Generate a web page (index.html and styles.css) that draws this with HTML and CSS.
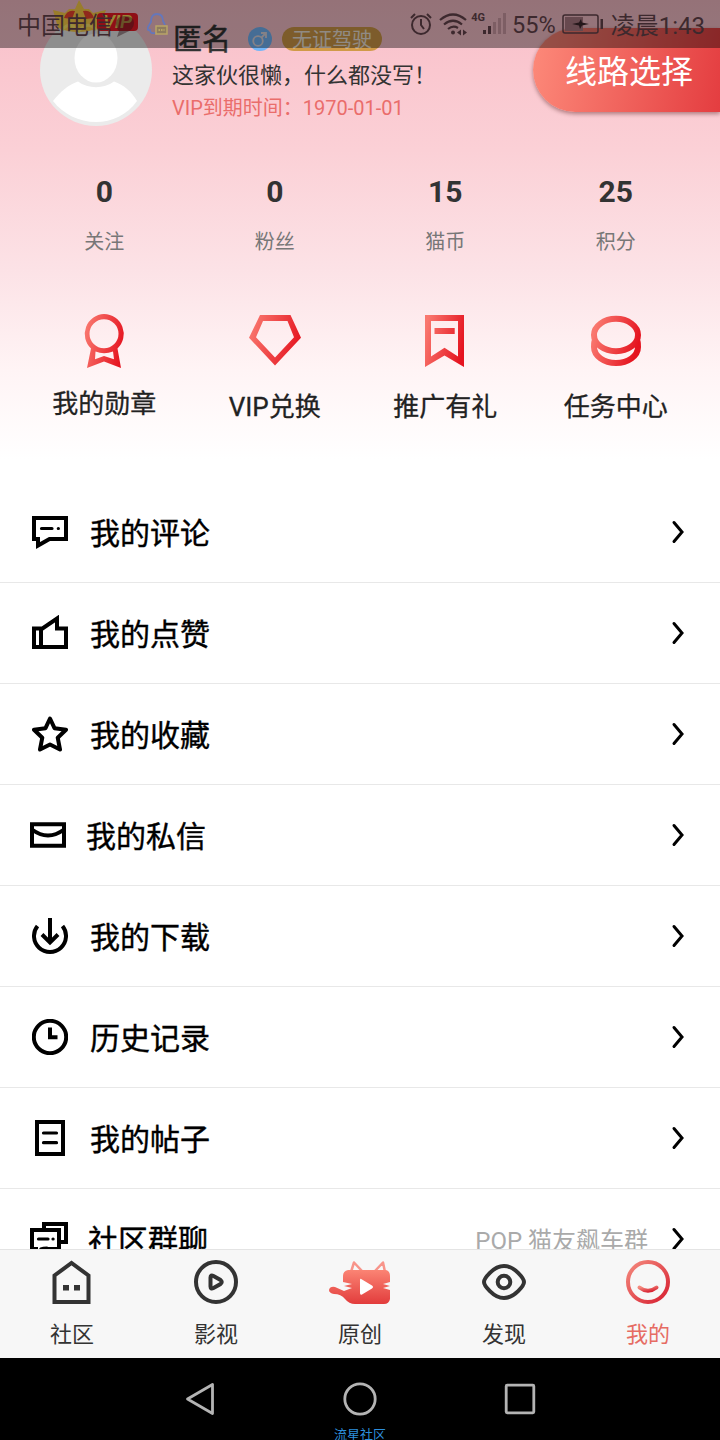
FILE: index.html
```
<!DOCTYPE html>
<html lang="zh-CN">
<head>
    <meta charset="UTF-8">
    <meta name="viewport" content="width=device-width, initial-scale=1.0">
    <title>我的</title>
    <link rel="stylesheet" href="styles.css">
</head>
<body>
    <!-- shared gradient for the red icons -->
    <svg class="defs" width="0" height="0">
        <defs>
            <linearGradient id="red" x1="0" y1="0.3" x2="1" y2="0.6">
                <stop offset="0" stop-color="#f9776e"/>
                <stop offset="1" stop-color="#e5131f"/>
            </linearGradient>
            <linearGradient id="cat" x1="0" y1="0" x2="0" y2="1">
                <stop offset="0" stop-color="#fb8474"/>
                <stop offset="1" stop-color="#e23c3c"/>
            </linearGradient>
            <linearGradient id="smile" x1="0" y1="0" x2="1" y2="1">
                <stop offset="0" stop-color="#f48a7e"/>
                <stop offset="1" stop-color="#d71f30"/>
            </linearGradient>
        </defs>
    </svg>

    <div class="app">
        <main class="content">
            <header class="profile">
                <div class="avatar">
                    <svg width="112" height="112" viewBox="0 0 112 112">
                        <circle cx="56" cy="56" r="56" fill="#ebebeb"/>
                        <ellipse cx="56" cy="44" rx="21.5" ry="24.5" fill="#fff"/>
                        <path d="M13 87C20 78 28 71 38 67.500C48 75 64 75 74 67.500C84 71 92 78 97 87C87 101 72 108 56 108C39 108 23 100 13 87Z" fill="#fff"/>
                    </svg>
                    <svg class="crown" width="58" height="34" viewBox="0 0 58 34">
                        <path d="M8 28L3 10L15 13L19 9L25 9L29 0L34 9L39 9L43 13L56 10L49 28Q28 36 8 28Z" fill="#ffd048"/>
                        <path d="M14 18Q17 9 25 11L22 19ZM33 11Q41 9 44 18L36 19Z" fill="#f0452f"/>
                        <path d="M12 30Q20 20 29 31Q38 20 46 30" fill="none" stroke="#ffe86a" stroke-width="3"/>
                    </svg>
                    <span class="vip-badge">VIP</span>
                </div>
                <div class="who">
                    <div class="name-line">
                        <span class="name">匿名</span>
                        <svg class="gender" width="24" height="24" viewBox="0 0 24 24">
                            <circle cx="12" cy="12" r="12" fill="#74b6f8"/>
                            <g fill="none" stroke="#dcd7e0" stroke-width="1.800">
                                <circle cx="10" cy="14" r="4.800"/>
                                <path d="M13.500 10.500L18 6M13 6H18V11"/>
                            </g>
                        </svg>
                        <span class="level">无证驾驶</span>
                    </div>
                    <div class="sign">这家伙很懒，什么都没写！</div>
                    <div class="expire">VIP到期时间：1970-01-01</div>
                </div>
                <div class="route">线路选择</div>
            </header>

            <section class="stats">
                <div class="stat"><b>0</b><span>关注</span></div>
                <div class="stat"><b>0</b><span>粉丝</span></div>
                <div class="stat"><b>15</b><span>猫币</span></div>
                <div class="stat"><b>25</b><span>积分</span></div>
            </section>

            <section class="shortcuts">
                <div class="shortcut medal">
                    <svg width="60" height="60" viewBox="0 0 60 60">
                        <path fill="url(#red)" fill-rule="evenodd" d="M30 3A20 20 0 0 1 43.500 37.500L47 57L30 50.500L13 57L17 37.500A20 20 0 0 1 30 3ZM30 8.300A14.500 14.500 0 1 0 30 37.300A14.500 14.500 0 1 0 30 8.300ZM21.500 40.500L21 48.300L30 45L40 48.300L39 40.500Q30 44 21.500 40.500Z"/>
                    </svg>
                    <span>我的勋章</span>
                </div>
                <div class="shortcut">
                    <svg width="60" height="60" viewBox="0 0 60 60">
                        <path fill="url(#red)" fill-rule="evenodd" d="M15 4H45.500L56 26.700L30 54.500L4 26.700ZM18 10L11 26.300L30 46.500L49 26.300L42.500 10Z"/>
                    </svg>
                    <span>VIP兑换</span>
                </div>
                <div class="shortcut">
                    <svg width="60" height="60" viewBox="0 0 60 60">
                        <path fill="url(#red)" fill-rule="evenodd" d="M10 4H49V56L29.500 44.500L10 56ZM16 10V45.500L29.500 36.700L43 45.500V10ZM19.500 17H39.700V23H19.500Z"/>
                    </svg>
                    <span>推广有礼</span>
                </div>
                <div class="shortcut">
                    <svg width="60" height="60" viewBox="0 0 60 60" fill="none" stroke="url(#red)" stroke-width="6">
                        <path d="M52 24A22 16.200 0 1 1 8 24A22 16.200 0 1 1 52 24ZM8.500 30Q8 32 8 36A22 16 0 0 0 52 36Q52 32 51.500 30"/>
                    </svg>
                    <span>任务中心</span>
                </div>
            </section>

            <section class="menu">
                <div class="row">
                    <svg class="icon" width="36" height="36" viewBox="0 0 36 36">
                        <path d="M2 4H34V25H17.500L6 31.500V25H2Z"/>
                        <path class="thin" d="M9.500 14.500H20M26.300 14.500H26.400"/>
                    </svg>
                    <span class="label">我的评论</span>
                    <svg class="arrow" width="14" height="24" viewBox="0 0 14 24"><path d="M3 2.500L11 12L3 21.500"/></svg>
                </div>
                <div class="row">
                    <svg class="icon" width="36" height="36" viewBox="0 0 36 36">
                        <path d="M2 13.500H10.500L25 3.500V13.500H34V32H2ZM9 13.500V32"/>
                    </svg>
                    <span class="label">我的点赞</span>
                    <svg class="arrow" width="14" height="24" viewBox="0 0 14 24"><path d="M3 2.500L11 12L3 21.500"/></svg>
                </div>
                <div class="row">
                    <svg class="icon round" width="36" height="36" viewBox="0 0 36 36">
                        <path d="M18 2.500L22.500 12.200L34 13.700L25.700 21.700L28 33.500L18 28.500L8 33.500L10.300 21.700L2 13.700L13.500 12.200Z"/>
                    </svg>
                    <span class="label">我的收藏</span>
                    <svg class="arrow" width="14" height="24" viewBox="0 0 14 24"><path d="M3 2.500L11 12L3 21.500"/></svg>
                </div>
                <div class="row mail">
                    <svg class="icon" width="36" height="36" viewBox="0 0 36 36">
                        <path d="M2 7.300H34V28.700H2ZM2 12.500Q18 24.500 34 12.500"/>
                    </svg>
                    <span class="label">我的私信</span>
                    <svg class="arrow" width="14" height="24" viewBox="0 0 14 24"><path d="M3 2.500L11 12L3 21.500"/></svg>
                </div>
                <div class="row">
                    <svg class="icon" width="36" height="36" viewBox="0 0 36 36">
                        <path d="M5.500 8A16 16 0 1 0 30.500 8M18 0V24M10 16.500L18 24.500L26 16.500"/>
                    </svg>
                    <span class="label">我的下载</span>
                    <svg class="arrow" width="14" height="24" viewBox="0 0 14 24"><path d="M3 2.500L11 12L3 21.500"/></svg>
                </div>
                <div class="row">
                    <svg class="icon" width="36" height="36" viewBox="0 0 36 36">
                        <circle cx="18" cy="18" r="16.200"/>
                        <path d="M18 8.500V18.300H25.500"/>
                    </svg>
                    <span class="label">历史记录</span>
                    <svg class="arrow" width="14" height="24" viewBox="0 0 14 24"><path d="M3 2.500L11 12L3 21.500"/></svg>
                </div>
                <div class="row">
                    <svg class="icon" width="36" height="36" viewBox="0 0 36 36">
                        <path d="M5 2H31V34H5Z"/>
                        <path class="thin" d="M11.500 13H24.500M11.500 22.700H24.500"/>
                    </svg>
                    <span class="label">我的帖子</span>
                    <svg class="arrow" width="14" height="24" viewBox="0 0 14 24"><path d="M3 2.500L11 12L3 21.500"/></svg>
                </div>
                <div class="row group">
                    <svg class="icon" width="38" height="36" viewBox="0 0 38 36">
                        <path d="M14 8V3H36V21H31M2 9H29V28H16L6 34V28H2Z"/>
                        <path class="thin" d="M8.500 18H18M23 18H23.100"/>
                        <path class="thin" d="M11 28Q13 27 17 27"/>
                    </svg>
                    <span class="label">社区群聊</span>
                    <span class="note">POP 猫友飙车群</span>
                    <svg class="arrow" width="14" height="24" viewBox="0 0 14 24"><path d="M3 2.500L11 12L3 21.500"/></svg>
                </div>
            </section>
        </main>

        <nav class="tabbar">
            <div class="tab">
                <svg width="44" height="44" viewBox="0 0 44 44">
                    <path d="M4.500 42V15.500L21.500 3L38.500 15.500V42Z" fill="none" stroke="#333" stroke-width="4"/>
                    <path d="M13 25H19V30.500H13ZM24 25H30V30.500H24Z" fill="#333"/>
                </svg>
                <span>社区</span>
            </div>
            <div class="tab">
                <svg width="44" height="44" viewBox="0 0 44 44" fill="none" stroke="#333" stroke-width="4">
                    <circle cx="22" cy="22" r="20"/>
                    <path d="M16.500 17.500Q16.500 14.500 19.500 16L26.500 20Q29 22 26.500 24L19.500 28Q16.500 29.500 16.500 26.500Z"/>
                </svg>
                <span>影视</span>
            </div>
            <div class="tab">
                <svg width="62" height="44" viewBox="0 0 62 44">
                    <path d="M22 12L25 2.500L33 11M46 11L54 2.500L56 12" fill="none" stroke="#f8948a" stroke-width="2.500" stroke-linejoin="round"/>
                    <path fill="url(#cat)" d="M19 10H57Q61 11 61 16V22L54 24L61 26L54 28L61 30V39Q60 44 55 44H26Q20 44 16 39Q12 34 5 34Q0 33 0 30Q1 26 6 27L15 31L23 28L15 26L23 24L14 22V16Q14 11 19 10Z"/>
                    <path d="M31 20Q31 18 33 19.500L43 25.500Q45 27 43 28.500L33 34.500Q31 35.500 31 33Z" fill="#fff"/>
                </svg>
                <span>原创</span>
            </div>
            <div class="tab">
                <svg width="44" height="44" viewBox="0 0 44 44" fill="none" stroke="#333" stroke-width="4">
                    <path d="M2 22C2 19 11 6 22 6C33 6 42 19 42 22C42 25 33 38 22 38C11 38 2 25 2 22Z"/>
                    <circle cx="22" cy="22" r="6.300"/>
                </svg>
                <span>发现</span>
            </div>
            <div class="tab active">
                <svg width="44" height="44" viewBox="0 0 44 44" fill="none" stroke="url(#smile)" stroke-width="4">
                    <circle cx="22" cy="22" r="20"/>
                    <path d="M13.500 27.500Q22 34 30.500 27.500" stroke-linecap="round"/>
                </svg>
                <span>我的</span>
            </div>
        </nav>

        <footer class="navbar">
            <svg width="34" height="36" viewBox="0 0 34 36"><path d="M29.500 3.500V32.500L4.500 18Z"/></svg>
            <svg width="34" height="36" viewBox="0 0 34 36"><circle cx="17" cy="18" r="15.200"/></svg>
            <svg width="34" height="36" viewBox="0 0 34 36"><rect x="3.200" y="4.200" width="27.600" height="27.600" rx="1"/></svg>
            <span class="mark">流星社区</span>
        </footer>

        <!-- translucent system bar over the page -->
        <div class="status">
            <span class="carrier">中国电信</span>
            <svg class="bubble" width="20" height="24" viewBox="0 0 20 24">
                <path d="M10 2Q19 2 19 9Q19 16 10 19L2 23L4 17Q1 14 1 9Q2 2 10 2Z" fill="#2d1519" opacity=".45"/>
            </svg>
            <svg class="qq" width="22" height="26" viewBox="0 0 22 26">
                <path d="M8 21Q3 22 3 18Q0 19 1 15L4 10Q4 2 10 2Q16 2 16 9L18 13" fill="none" stroke="#6577bb" stroke-width="1.800"/>
                <rect x="9" y="14" width="11" height="8" fill="#8e7c5f" stroke="#b8a467" stroke-width="1.500"/>
                <path d="M11.500 18H17.500" stroke="#c5b36b" stroke-width="1.500" stroke-dasharray="1.500 1"/>
            </svg>
            <svg class="alarm" width="24" height="24" viewBox="0 0 24 24" fill="none" stroke="#3d292e" stroke-width="2">
                <circle cx="12" cy="13" r="9"/>
                <path d="M12 7V13L15 17M2 6L6 2M18 2L22 6"/>
            </svg>
            <svg class="wifi" width="28" height="24" viewBox="0 0 28 24" fill="none" stroke="#3d292e" stroke-width="2.200">
                <path d="M1 8Q14 -3 27 8M5 12.500Q14 5 23 12.500M9 17Q14 13 19 16"/>
                <circle cx="14" cy="20.500" r="2" fill="#3d292e" stroke="none"/>
                <path d="M22 17.500V23.500L18 20.500ZM24 17.500V23.500L28 20.500Z" fill="#3d292e" stroke="none"/>
            </svg>
            <span class="net">4G</span>
            <svg class="signal" width="23" height="22" viewBox="0 0 23 22">
                <path d="M0 17H3V21H0ZM5 13H8V21H5Z" fill="#3d292e"/>
                <path d="M10 9H13V21H10ZM15 5H18V21H15ZM20 0H23V21H20Z" fill="#7d5e64"/>
            </svg>
            <span class="percent">55%</span>
            <svg class="battery" width="42" height="20" viewBox="0 0 42 20">
                <rect x="1" y="1" width="35" height="18" rx="2" fill="none" stroke="#3d292e" stroke-width="1.500"/>
                <rect x="3" y="3" width="18" height="14" fill="#67494f"/>
                <path d="M10 10L17 8.500L19 5L20 8.500L27 10L20 11.500L18 15L17 11.500Z" fill="#24171a"/>
                <path d="M38.500 5H41V15H38.500Z" fill="#3d292e"/>
            </svg>
            <span class="clock">凌晨1:43</span>
        </div>
    </div>
</body>
</html>
```
FILE: styles.css
```
* {
    box-sizing: border-box;
}
body {
    margin: 0;
    background: #fff;
    font-family: Roboto, "Noto Sans CJK SC", sans-serif;
    color: #333;
}
svg {
    display: block;
    flex: none;
}
.defs {
    position: absolute;
}
.app {
    position: relative;
    display: flex;
    flex-direction: column;
    width: 720px;
    height: 1440px;
    overflow: hidden;
}
.content {
    height: 1249px;
    overflow: hidden;
    background: linear-gradient(#f9bfc9 0, #fbd0d6 150px, #fce2e6 270px, #fff4f5 370px, #fff 460px);
}

/* profile */
.profile {
    display: flex;
    height: 134px;
    padding: 14px 0 0 40px;
}
.avatar {
    position: relative;
    width: 112px;
    height: 112px;
}
.crown {
    position: absolute;
    left: 10px;
    top: -14px;
}
.vip-badge {
    position: absolute;
    left: 57px;
    top: -1px;
    width: 41px;
    height: 18px;
    border-radius: 4px;
    background: #ee1a26;
    color: #ffe05a;
    font: italic bold 18px/18px "Liberation Sans", sans-serif;
    text-align: center;
}
.who {
    flex: 1;
    padding: 8px 0 0 20px;
    white-space: nowrap;
}
.name-line {
    display: flex;
    align-items: center;
    height: 34px;
}
.name {
    width: 76px;
    padding: 2px 0 0 1px;
    font-size: 29px;
    line-height: 34px;
    -webkit-text-stroke: 0.5px;
}
.level {
    width: 100px;
    height: 24px;
    margin-left: 10px;
    border-radius: 12px;
    background: #d09a48;
    color: #f0e6dc;
    font-size: 20px;
    line-height: 26px;
    text-align: center;
}
.sign {
    height: 36px;
    font-size: 22px;
    line-height: 40px;
}
.expire {
    font-size: 20px;
    line-height: 32px;
    color: #ea6d6b;
}
.route {
    width: 187px;
    height: 84px;
    margin-top: 14px;
    padding-left: 32px;
    border-radius: 42px 0 0 42px;
    background: linear-gradient(100deg, #fd8a7a, #e43d40);
    box-shadow: 0 2px 4px rgba(60, 0, 0, 0.4);
    color: #fff;
    font-size: 32px;
    line-height: 88px;
    white-space: nowrap;
}

/* counters */
.stats,
.shortcuts {
    display: grid;
    grid-template-columns: repeat(4, 1fr);
    padding: 0 19px;
    text-align: center;
}
.stats {
    height: 177px;
    padding-top: 38px;
}
.stat b {
    display: block;
    font-size: 30px;
    line-height: 40px;
}
.stat span {
    display: block;
    margin-top: 15px;
    font-size: 20px;
    line-height: 30px;
    color: #777;
}
.shortcuts {
    height: 171px;
    font-size: 26px;
    line-height: 36px;
    color: #222;
    -webkit-text-stroke: 0.3px;
}
.shortcut svg {
    margin: 0 auto 18px;
}
.shortcut.medal svg {
    margin-bottom: 15px;
}

/* menu list */
.row {
    display: flex;
    align-items: center;
    height: 101px;
    padding: 0 35px 1px 32px;
    border-bottom: 1px solid #e8e8e8;
    color: #000;
}
.row.mail,
.row.group {
    padding-left: 30px;
}
.icon {
    fill: none;
    stroke: #000;
    stroke-width: 4;
}
.icon .thin {
    stroke-width: 3.2;
    stroke-linecap: round;
}
.icon.round {
    stroke-linejoin: round;
}
.label {
    flex: 1;
    padding: 4px 0 0 22px;
    font-size: 30px;
    line-height: 40px;
    -webkit-text-stroke: 0.4px;
}
.mail .label,
.group .label {
    padding-left: 20px;
}
.note {
    margin-right: 23px;
    font-size: 24px;
    color: #aaa;
}
.arrow {
    fill: none;
    stroke: #000;
    stroke-width: 3;
    stroke-linecap: round;
}

/* bottom tabs */
.tabbar {
    display: grid;
    grid-template-columns: repeat(5, 1fr);
    height: 109px;
    border-top: 1px solid #e4e4e4;
    background: #f7f7f7;
    font-size: 22px;
    text-align: center;
}
.tab svg {
    margin: 10px auto 15px;
}
.tab span {
    display: block;
    line-height: 32px;
}
.tab.active {
    color: #e66c63;
}

/* system navigation */
.navbar {
    position: relative;
    display: flex;
    justify-content: center;
    gap: 126px;
    height: 82px;
    padding-top: 23px;
    background: #000;
}
.navbar svg {
    fill: none;
    stroke: #b4b4b4;
    stroke-width: 2.8;
    stroke-linejoin: round;
}
.mark {
    position: absolute;
    left: 0;
    right: 0;
    bottom: -4px;
    color: #2d8fdc;
    font-size: 13px;
    line-height: 18px;
    text-align: center;
}

/* status bar */
.status {
    position: absolute;
    top: 0;
    left: 0;
    display: flex;
    align-items: center;
    width: 720px;
    height: 48px;
    padding: 0 15px 0 17px;
    background: rgba(0, 0, 0, 0.4);
    color: #3d292e;
    font-size: 24px;
    line-height: 28px;
    white-space: nowrap;
}
.carrier,
.clock {
    margin-top: 3px;
}
.carrier {
    width: 98px;
}
.bubble {
    margin-top: 3px;
}
.qq {
    margin: 2px 0 0 12px;
}
.alarm {
    margin-left: auto;
}
.wifi {
    margin-left: 6px;
}
.net {
    margin: 0 -2px 12px 4px;
    font-size: 11px;
    font-weight: bold;
    line-height: 14px;
}
.percent {
    margin: 2px 0 0 6px;
    font-size: 23.5px;
}
.battery {
    margin: 0 7px 0 6px;
}
```
